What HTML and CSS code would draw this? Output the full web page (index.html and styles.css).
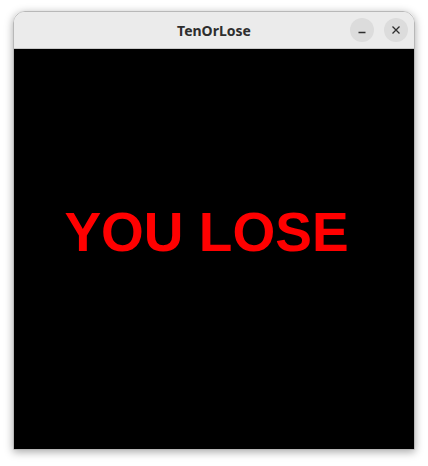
FILE: index.html
```html
<!DOCTYPE html>
<html>
<head>
<meta charset="utf-8">
<link rel="stylesheet" href="styles.css">
</head>
<body>
<div class="window">
  <div class="titlebar">
    <div class="title">TenOrLose</div>
    <div class="controls">
      <button class="ctl" aria-label="minimize">
        <svg width="10" height="10" viewBox="0 0 10 10"><path d="M1.5 7.5h7" stroke="#2e2e2e" stroke-width="1.3" fill="none"/></svg>
      </button>
      <button class="ctl" aria-label="close">
        <svg width="10" height="10" viewBox="0 0 10 10"><path d="M1.5 1.5l7 7M8.5 1.5l-7 7" stroke="#2e2e2e" stroke-width="1.3" fill="none"/></svg>
      </button>
    </div>
  </div>
  <div class="content">
    <div class="message">YOU LOSE</div>
  </div>
</div>
</body>
</html>
```

FILE: styles.css
```css
html, body {
  margin: 0;
  padding: 0;
  background: #ffffff;
}
body {
  width: 428px;
  height: 466px;
  overflow: hidden;
}
.window {
  margin: 11px 0 0 13px;
  width: 400px;
  border: 1px solid #b8b8b8;
  border-radius: 12px 12px 0 0;
  box-shadow: 0 2px 8px rgba(0,0,0,0.35);
  overflow: hidden;
}
.titlebar {
  position: relative;
  height: 36px;
  background: #ebebeb;
  border-bottom: 1px solid #c8c8c8;
  display: flex;
  align-items: center;
  justify-content: center;
}
.title {
  font-family: "Noto Sans", "DejaVu Sans", sans-serif;
  font-weight: 700;
  font-size: 14px;
  color: #2e2e2e;
}
.controls {
  position: absolute;
  right: 6px;
  top: 6px;
  display: flex;
  gap: 10px;
}
.ctl {
  width: 24px;
  height: 24px;
  border-radius: 50%;
  border: none;
  padding: 0;
  background: #dcdcdc;
  display: flex;
  align-items: center;
  justify-content: center;
}
.content {
  height: 400px;
  background: #000000;
  display: flex;
  align-items: center;
  justify-content: center;
}
.message {
  font-family: "Liberation Sans", Arial, sans-serif;
  font-weight: 700;
  font-size: 55px;
  color: #ff0000;
  margin-top: -35px;
  margin-left: -15px;
}
```
